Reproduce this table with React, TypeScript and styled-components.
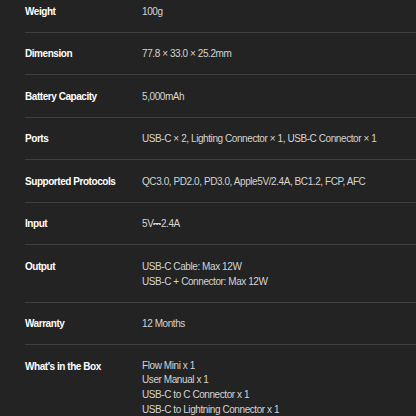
import styled, { createGlobalStyle } from "styled-components";

const GlobalStyle = createGlobalStyle`
  html, body {
    margin: 0;
    padding: 0;
    background: #232323;
    overflow: hidden;
  }
  body {
    font-family: "Liberation Sans", Arial, sans-serif;
  }
`;

const Page = styled.div`
  width: 416px;
  height: 416px;
  overflow: hidden;
  background: #232323;
`;

const SpecTable = styled.dl`
  margin: -9.75px 0 0 25px;
  padding: 0;
`;

const Row = styled.div`
  display: grid;
  grid-template-columns: 117px 1fr;
  padding: 13.25px 0;
  border-bottom: 1px solid #3f3f3f;
  &:last-child {
    border-bottom: none;
  }
`;

const Label = styled.dt`
  margin: 0;
  font-size: 10px;
  letter-spacing: -0.45px;
  line-height: 15px;
  font-weight: bold;
  color: #ffffff;
  white-space: nowrap;
`;

const Value = styled.dd`
  margin: 0;
  font-size: 10px;
  letter-spacing: -0.42px;
  line-height: 15px;
  color: #d4d4d4;
  white-space: nowrap;
`;

const Line = styled.div<{ $tight?: boolean }>`
  line-height: ${(p) => (p.$tight ? "14.7px" : "15px")};
`;

const specs: { label: string; value: string[]; tight?: boolean }[] = [
  { label: "Weight", value: ["100g"] },
  { label: "Dimension", value: ["77.8 × 33.0 × 25.2mm"] },
  { label: "Battery Capacity", value: ["5,000mAh"] },
  {
    label: "Ports",
    value: ["USB-C × 2, Lighting Connector × 1, USB-C Connector × 1"],
  },
  {
    label: "Supported Protocols",
    value: ["QC3.0, PD2.0, PD3.0, Apple5V/2.4A, BC1.2, FCP, AFC"],
  },
  { label: "Input", value: ["5V⎓2.4A"] },
  {
    label: "Output",
    value: ["USB-C Cable: Max 12W", "USB-C + Connector: Max 12W"],
  },
  { label: "Warranty", value: ["12 Months"] },
  {
    label: "What's in the Box",
    tight: true,
    value: [
      "Flow Mini x 1",
      "User Manual x 1",
      "USB-C to C Connector x 1",
      "USB-C to Lightning Connector x 1",
    ],
  },
];

export default function App() {
  return (
    <Page>
      <GlobalStyle />
      <SpecTable>
        {specs.map((s) => (
          <Row key={s.label}>
            <Label>{s.label}</Label>
            <Value>
              {s.value.map((v) => (
                <Line key={v} $tight={s.tight}>
                  {v}
                </Line>
              ))}
            </Value>
          </Row>
        ))}
      </SpecTable>
    </Page>
  );
}
